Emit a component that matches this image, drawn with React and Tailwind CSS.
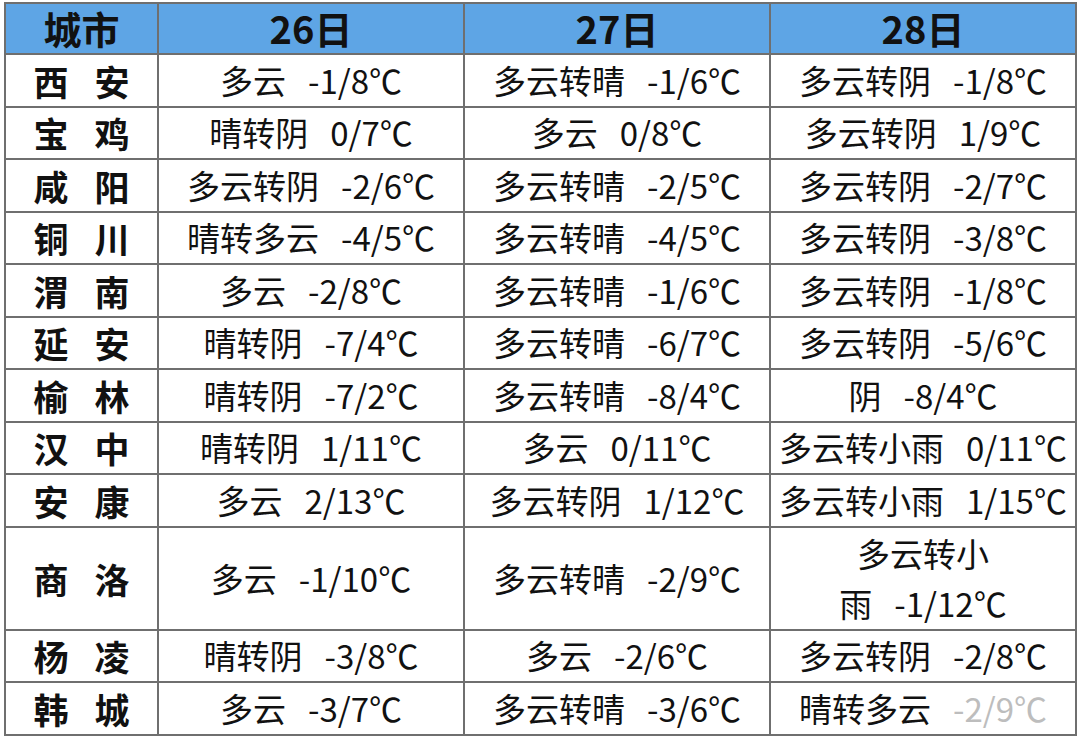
import React from "react";

const rows = [
  ["西", "安", ["多云", "-1/8℃"], ["多云转晴", "-1/6℃"], ["多云转阴", "-1/8℃"]],
  ["宝", "鸡", ["晴转阴", "0/7℃"], ["多云", "0/8℃"], ["多云转阴", "1/9℃"]],
  ["咸", "阳", ["多云转阴", "-2/6℃"], ["多云转晴", "-2/5℃"], ["多云转阴", "-2/7℃"]],
  ["铜", "川", ["晴转多云", "-4/5℃"], ["多云转晴", "-4/5℃"], ["多云转阴", "-3/8℃"]],
  ["渭", "南", ["多云", "-2/8℃"], ["多云转晴", "-1/6℃"], ["多云转阴", "-1/8℃"]],
  ["延", "安", ["晴转阴", "-7/4℃"], ["多云转晴", "-6/7℃"], ["多云转阴", "-5/6℃"]],
  ["榆", "林", ["晴转阴", "-7/2℃"], ["多云转晴", "-8/4℃"], ["阴", "-8/4℃"]],
  ["汉", "中", ["晴转阴", "1/11℃"], ["多云", "0/11℃"], ["多云转小雨", "0/11℃"]],
  ["安", "康", ["多云", "2/13℃"], ["多云转阴", "1/12℃"], ["多云转小雨", "1/15℃"]],
  ["商", "洛", ["多云", "-1/10℃"], ["多云转晴", "-2/9℃"], ["多云转小", "雨", "-1/12℃"]],
  ["杨", "凌", ["晴转阴", "-3/8℃"], ["多云", "-2/6℃"], ["多云转阴", "-2/8℃"]],
  ["韩", "城", ["多云", "-3/7℃"], ["多云转晴", "-3/6℃"], ["晴转多云", "-2/9℃"]],
];

const Cell = ({ data, faded }) => {
  if (data.length === 3) {
    return (
      <td className="border-2 border-[#6f6f6f] text-center leading-[50px]">
        <div>{data[0]}</div>
        <div>
          <span>{data[1]}</span>
          <span className="ml-[22px]">{data[2]}</span>
        </div>
      </td>
    );
  }
  return (
    <td className="border-2 border-[#6f6f6f] text-center whitespace-nowrap leading-none">
      <span>{data[0]}</span>
      <span className={faded ? "ml-[22px] text-[#bdbdbd]" : "ml-[22px]"}>{data[1]}</span>
    </td>
  );
};

export default function App() {
  return (
    <div className="w-[1080px] h-[737px] bg-white pl-[4px] pt-[2px] font-['Noto_Sans_CJK_SC',sans-serif] text-[#111]">
      <table className="border-collapse table-fixed w-[1071px]">
        <colgroup>
          <col className="w-[153px]" />
          <col className="w-[306px]" />
          <col className="w-[306px]" />
          <col className="w-[306px]" />
        </colgroup>
        <thead>
          <tr className="h-[51px] bg-[#5ea5e5] text-[38px] font-bold">
            <th className="border-2 border-[#6f6f6f] leading-none pb-[2px]">城市</th>
            <th className="border-2 border-[#6f6f6f] leading-none pb-[2px]">26日</th>
            <th className="border-2 border-[#6f6f6f] leading-none pb-[2px]">27日</th>
            <th className="border-2 border-[#6f6f6f] leading-none pb-[2px]">28日</th>
          </tr>
        </thead>
        <tbody className="text-[33px]">
          {rows.map((r, i) => (
            <tr key={i} className={r[0] === "商" ? "h-[103px]" : "h-[52.5px]"}>
              <td className="border-2 border-[#6f6f6f] text-[35px] font-bold">
                <div className="flex justify-center gap-[26px] leading-none">
                  <span>{r[0]}</span>
                  <span>{r[1]}</span>
                </div>
              </td>
              <Cell data={r[2]} />
              <Cell data={r[3]} />
              <Cell data={r[4]} faded={r[0] === "韩"} />
            </tr>
          ))}
        </tbody>
      </table>
    </div>
  );
}
